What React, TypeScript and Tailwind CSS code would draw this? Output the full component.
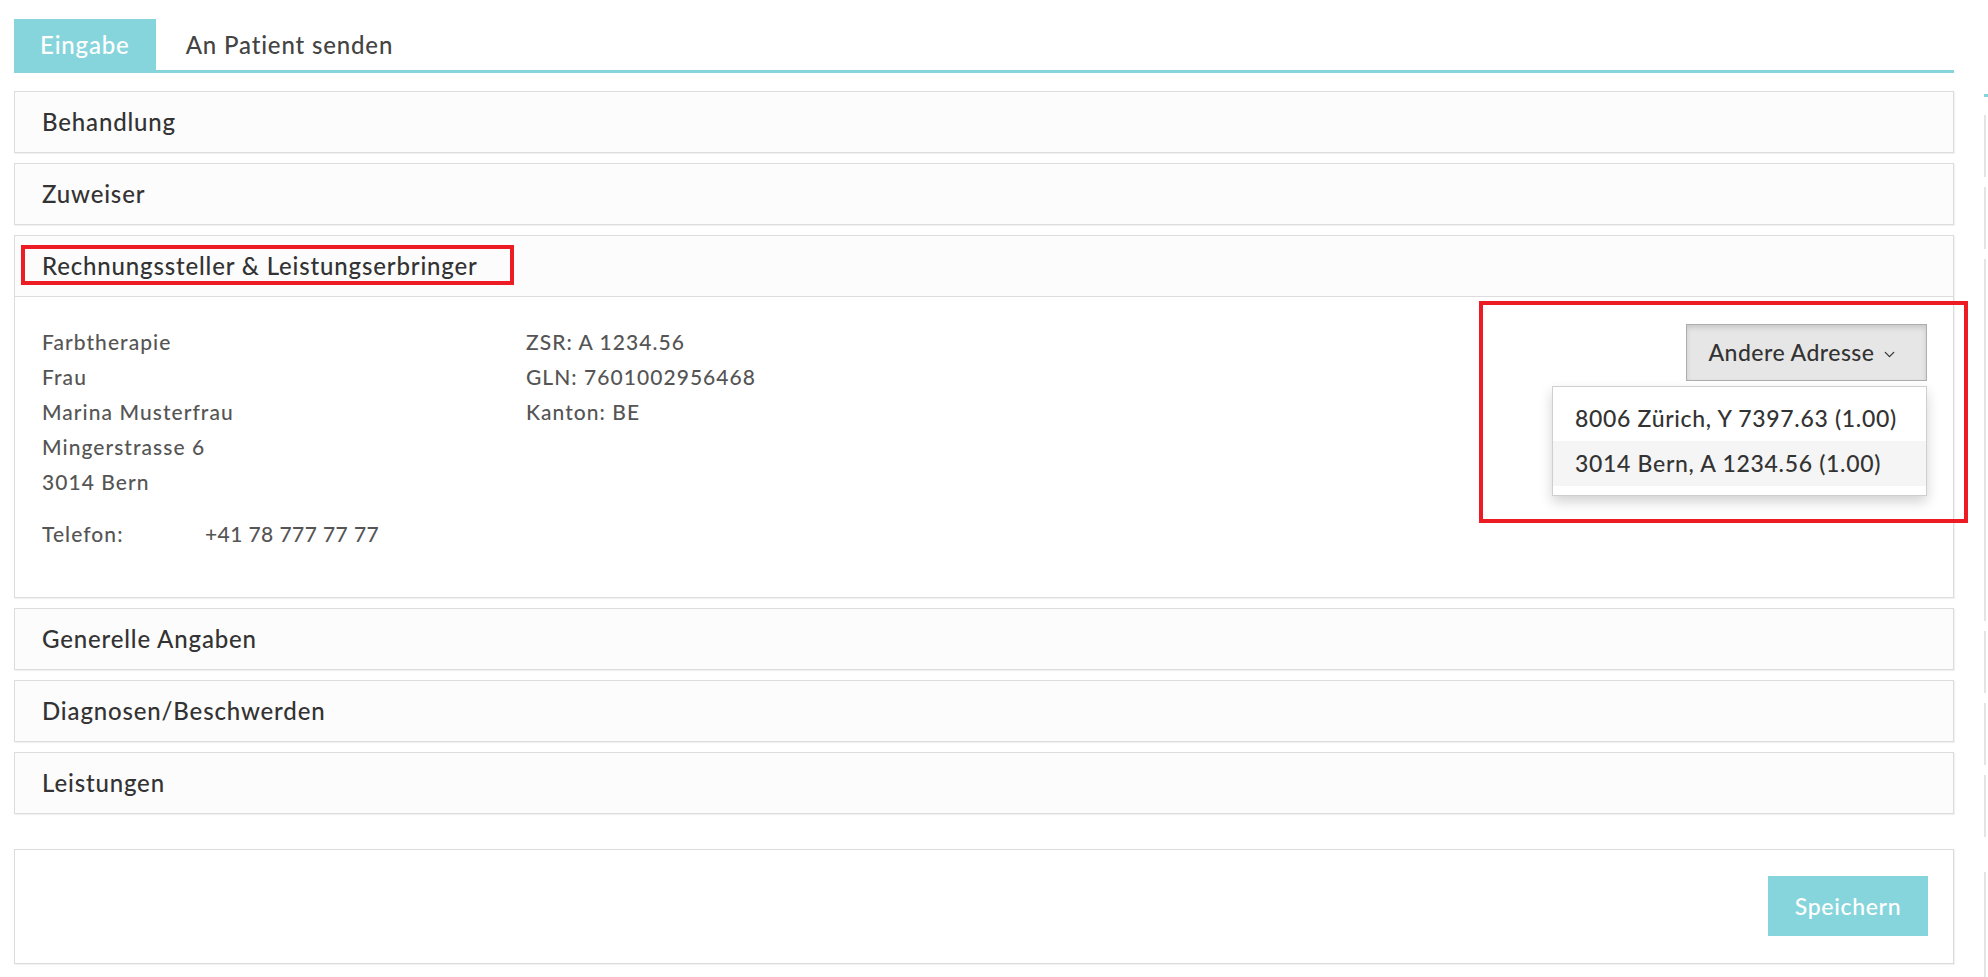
import React from "react";
import { ChevronDown } from "lucide-react";

const teal = "bg-[#87d5dc]";

function Panel({ title }: { title: string }) {
  return (
    <div className="h-[62px] border border-[#dcdcdc] bg-[#fcfcfc] shadow-[1px_1px_1px_rgba(0,0,0,0.05)] flex items-center pl-[27px] text-[24px] font-medium tracking-[0.035em] text-[#333]">
      {title}
    </div>
  );
}

function GhostColumn() {
  const box = "border-l-2 border-[#e4e4e4]";
  return (
    <div className="ml-[30px] w-[300px] shrink-0 pt-[43px]">
      <div className="h-[54px] border-b-[3px] border-[#87d5dc]" />
      <div className="mt-[18px] flex flex-col gap-[10px]">
        <div className={`h-[62px] ${box}`} />
        <div className={`h-[62px] ${box}`} />
        <div className={`h-[362px] ${box}`} />
        <div className={`h-[62px] ${box}`} />
        <div className={`h-[62px] ${box}`} />
        <div className={`h-[62px] ${box}`} />
        <div className={`h-[115px] mt-[25px] ${box}`} />
      </div>
    </div>
  );
}

export default function App() {
  return (
    <div className="w-[1988px] h-[977px] overflow-hidden bg-white flex font-['Lato',sans-serif]">
      <div className="w-[1940px] ml-[14px] pt-[19px] shrink-0">
        {/* Tabs */}
        <div className="flex h-[54px] border-b-[3px] border-[#87d5dc]">
          <div className={`${teal} text-white px-[26px] flex items-center text-[24px] font-medium tracking-[0.035em]`}>
            Eingabe
          </div>
          <div className="px-[30px] flex items-center text-[24px] font-medium tracking-[0.035em] text-[#444]">
            An Patient senden
          </div>
        </div>

        <div className="mt-[18px] flex flex-col gap-[10px]">
          <Panel title="Behandlung" />
          <Panel title="Zuweiser" />

          {/* Expanded panel */}
          <div className="border border-[#dcdcdc] shadow-[1px_1px_1px_rgba(0,0,0,0.05)]">
            <div className="relative h-[61px] border-b border-[#dcdcdc] bg-[#fcfcfc] flex items-center pl-[27px] text-[24px] font-medium tracking-[0.035em] text-[#333]">
              Rechnungssteller &amp; Leistungserbringer
              <div className="absolute left-[6px] top-[9px] w-[493px] h-[40px] border-4 border-[#ed1c24]" />
            </div>
            <div className="relative bg-white flex pl-[27px] pt-[27px] pb-[46px] text-[21px] font-medium tracking-[0.05em] text-[#555] leading-[35px]">
              <div className="w-[484px] shrink-0">
                <div>Farbtherapie</div>
                <div>Frau</div>
                <div>Marina Musterfrau</div>
                <div>Mingerstrasse 6</div>
                <div>3014 Bern</div>
                <div className="mt-[17px] flex">
                  <span className="w-[163px]">Telefon:</span>
                  <span className="tracking-[0.02em]">+41 78 777 77 77</span>
                </div>
              </div>
              <div>
                <div>ZSR: A 1234.56</div>
                <div>GLN: 7601002956468</div>
                <div>Kanton: BE</div>
              </div>
              <div className="ml-auto mr-[26px] relative self-start">
                <button className="w-[241px] h-[57px] bg-[#e6e6e6] border border-[#adadad] shadow-[inset_0_3px_5px_rgba(0,0,0,0.125)] flex items-center justify-center gap-[7px] pr-[6px] text-[23px] font-medium tracking-[0.02em] text-[#333]">
                  Andere Adresse
                  <ChevronDown size={17} strokeWidth={1.8} className="mt-[3px]" />
                </button>
                <div className="absolute right-0 top-[62px] w-[375px] bg-white border border-[#cfcfcf] shadow-[0_6px_12px_rgba(0,0,0,0.175)] py-[9px] text-[23px] font-medium tracking-[0.03em] text-[#333] leading-[45px] whitespace-nowrap z-10">
                  <div className="px-[22px]">8006 Zürich, Y 7397.63 (1.00)</div>
                  <div className="px-[22px] bg-[#f5f5f5]">3014 Bern, A 1234.56 (1.00)</div>
                </div>
              </div>
              <div className="absolute left-[1464px] top-[4px] w-[489px] h-[222px] border-4 border-[#ed1c24] z-20 pointer-events-none" />
            </div>
          </div>

          <Panel title="Generelle Angaben" />
          <Panel title="Diagnosen/Beschwerden" />
          <Panel title="Leistungen" />
        </div>

        {/* Footer */}
        <div className="mt-[35px] h-[115px] border border-[#dcdcdc] bg-white shadow-[1px_1px_1px_rgba(0,0,0,0.05)] flex justify-end items-start pt-[26px] pr-[25px]">
          <button className={`${teal} w-[160px] h-[60px] text-white text-[23px] font-medium tracking-[0.03em]`}>
            Speichern
          </button>
        </div>
      </div>
      <GhostColumn />
    </div>
  );
}
